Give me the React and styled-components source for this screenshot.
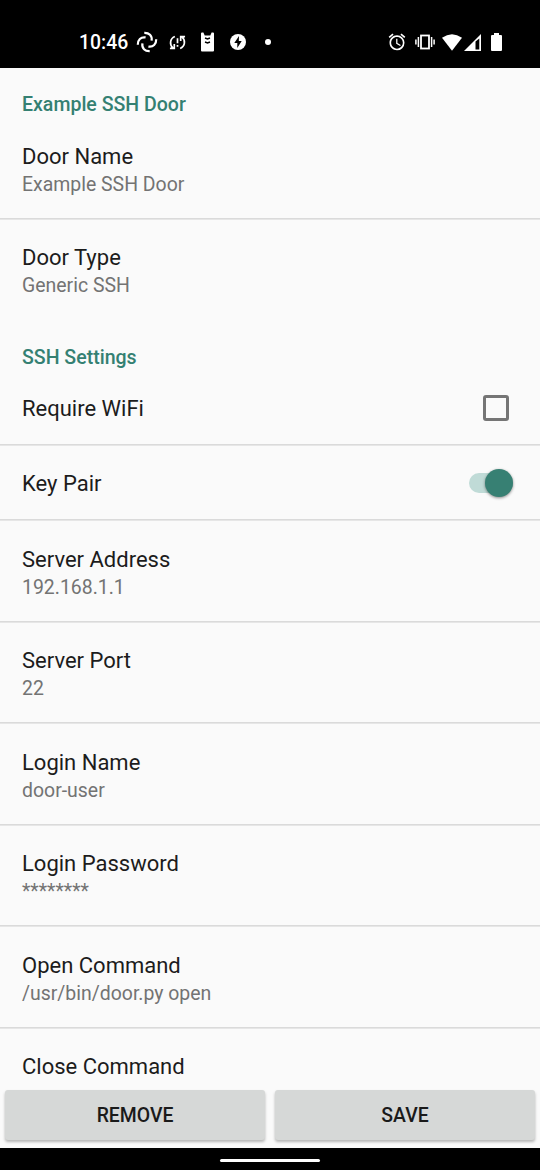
import React from "react";
import styled, { createGlobalStyle } from "styled-components";
import { MdAlarm } from "react-icons/md";

const GlobalStyle = createGlobalStyle`
  * { box-sizing: border-box; }
  body { margin: 0; background: #fafafa; font-family: Roboto, sans-serif; }
`;

const Screen = styled.div`
  width: 540px;
  height: 1170px;
  display: flex;
  flex-direction: column;
  overflow: hidden;
  background: #fafafa;
`;

const StatusBar = styled.header`
  flex: none;
  height: 68px;
  padding: 16px 38px 0 79px;
  display: flex;
  align-items: center;
  justify-content: space-between;
  background: #000;
  color: #fff;
`;

const Clock = styled.span`
  width: 56.5px;
  padding-top: 2px;
  font-size: 19.4px;
  font-weight: 500;
  line-height: 24px;
`;

const StatusGroup = styled.div`
  display: flex;
  align-items: center;
  svg { display: block; flex: none; }
`;

const Glyph = styled.svg`
  width: ${(p) => p.$w}px;
  height: ${(p) => p.$h}px;
  margin-left: ${(p) => p.$gap || 0}px;
`;

const Settings = styled.main`
  flex: 1;
  min-height: 0;
  overflow: hidden;
`;

const Category = styled.h2`
  height: 50px;
  margin: 0;
  padding: 25px 22px 0;
  color: #348072;
  font-size: 19.55px;
  font-weight: 500;
  line-height: 24px;
`;

const Row = styled.div`
  height: ${(p) => (p.$single ? 75 : 101.5)}px;
  padding: 0 22px;
  display: flex;
  align-items: center;
  justify-content: space-between;
  background: ${(p) => (p.$last ? "none" : "linear-gradient(#dadada 50%, #e6e6e6 50%) bottom / 100% 2px no-repeat")};
`;

const Label = styled.div`
  padding: ${(p) => (p.$single ? "0 0 1px" : "4px 0 0")};
`;

const Title = styled.div`
  color: #1c1c1c;
  font-size: 22px;
  line-height: 27px;
`;

const Summary = styled.div`
  color: #737373;
  font-size: 19.45px;
  line-height: 29px;
`;

const Checkbox = styled.span`
  width: 26px;
  height: 26px;
  margin: 0 9px 2px 0;
  border: 3px solid #757575;
  border-radius: 3px;
`;

const Track = styled.span`
  width: 44px;
  height: 20px;
  margin: 0 5px 2px 0;
  display: flex;
  align-items: center;
  justify-content: flex-end;
  border-radius: 10px;
  background: #c0dbd7;
`;

const Thumb = styled.span`
  width: 28px;
  height: 28px;
  border-radius: 50%;
  background: #378073;
  box-shadow: 0 1px 3px rgba(0, 0, 0, 0.45);
`;

const Actions = styled.footer`
  flex: none;
  height: 58px;
  padding: 0 5px 8px;
  display: flex;
  gap: 10px;
`;

const Action = styled.button`
  flex: 1;
  padding: 2px 0 0;
  border: 0;
  border-radius: 3px;
  background: #d6d8d7;
  box-shadow: 0 2px 3px rgba(0, 0, 0, 0.28);
  color: #1a1a1a;
  font: 500 19.4px/24px Roboto, sans-serif;
`;

const NavBar = styled.nav`
  flex: none;
  height: 22px;
  display: flex;
  align-items: center;
  justify-content: center;
  padding-top: 2px;
  background: #000;
`;

const Handle = styled.span`
  width: 100px;
  height: 3px;
  border-radius: 1.5px;
  background: #fff;
`;

function Item({ title, summary, last, children }) {
  const single = Boolean(children);
  return (
    <Row $single={single} $last={last}>
      <Label $single={single}>
        <Title>{title}</Title>
        {!single && <Summary>{summary || "\u00a0"}</Summary>}
      </Label>
      {children}
    </Row>
  );
}

function Notifications() {
  return (
    <>
      <Glyph $w={22} $h={22} viewBox="0 0 22 22" fill="none" stroke="#fff" strokeWidth="2.2">
        {[0, 90, 180, 270].map((a) => (
          <path key={a} d="M8.3 1.8C13 1.6 16.4 4.8 15.6 9.6" transform={`rotate(${a} 11 11)`} />
        ))}
      </Glyph>
      <Glyph $w={17} $h={17} $gap={11} viewBox="0 0 18 18" fill="none" stroke="#fff" strokeWidth="1.8">
        <path d="M6.2 2.7C.8 5 .3 11.4 4.2 15M11.8 15.3C17.2 13 17.7 6.6 13.8 3M1 15.2h4.6v-4.5M17 2.8h-4.6v4.5M9 4.5v5.3M9 11.7v1.9" />
      </Glyph>
      <Glyph $w={13} $h={20} $gap={15} viewBox="0 0 13 20">
        <path fill="#fff" d="M0 1.5Q0 .5 1 .5h1.4l1.3 3.1h5.6L10.6.5H12q1 0 1 1v17q0 1-1 1H1q-1 0-1-1Z" />
        <path fill="none" stroke="#000" strokeWidth="1.4" d="M4 6l2.5 1L9 6M4 10l2.5 1L9 10" />
      </Glyph>
      <Glyph $w={16} $h={16} $gap={16} viewBox="0 0 16 16">
        <circle cx="8" cy="8" r="8" fill="#fff" />
        <path d="M9 2 4.3 9h3v5l4.4-7H8.8Z" fill="#000" />
      </Glyph>
      <Glyph $w={6} $h={6} $gap={19} viewBox="0 0 6 6">
        <circle cx="3" cy="3" r="3" fill="#fff" />
      </Glyph>
    </>
  );
}

function SystemIcons() {
  return (
    <>
      <MdAlarm size={20} />
      <Glyph $w={20} $h={16} $gap={8} viewBox="0 0 20 16" fill="none" stroke="#fff">
        <rect x="6" y="1.5" width="8" height="13" strokeWidth="1.8" />
        <path strokeWidth="1.5" d="M3.4 3v10M16.6 3v10M.9 5.5v5M19.1 5.5v5" />
      </Glyph>
      <Glyph $w={20} $h={17} $gap={7} viewBox="0 0 20 17">
        <path fill="#fff" d="M0 3.7Q10-3.3 20 3.7L10 16.8Z" />
      </Glyph>
      <Glyph $w={17} $h={17} $gap={2} viewBox="0 0 17 17">
        <path fill="#fff" fillRule="evenodd" d="M17 0v17H0ZM11.5 7.6v8h3.8V4.4Z" />
      </Glyph>
      <Glyph $w={11} $h={18} $gap={10} viewBox="0 0 11 18">
        <path fill="#fff" d="M3 0h5v2h2q1 0 1 1v14q0 1-1 1H1q-1 0-1-1V3q0-1 1-1h2Z" />
      </Glyph>
    </>
  );
}

export default function App() {
  return (
    <Screen>
      <GlobalStyle />
      <StatusBar>
        <StatusGroup>
          <Clock>10:46</Clock>
          <Notifications />
        </StatusGroup>
        <StatusGroup>
          <SystemIcons />
        </StatusGroup>
      </StatusBar>
      <Settings>
        <Category>Example SSH Door</Category>
        <Item title="Door Name" summary="Example SSH Door" />
        <Item title="Door Type" summary="Generic SSH" last />
        <Category>SSH Settings</Category>
        <Item title="Require WiFi">
          <Checkbox />
        </Item>
        <Item title="Key Pair">
          <Track>
            <Thumb />
          </Track>
        </Item>
        <Item title="Server Address" summary="192.168.1.1" />
        <Item title="Server Port" summary="22" />
        <Item title="Login Name" summary="door-user" />
        <Item title="Login Password" summary="********" />
        <Item title="Open Command" summary="/usr/bin/door.py open" />
        <Item title="Close Command" last />
      </Settings>
      <Actions>
        <Action>REMOVE</Action>
        <Action>SAVE</Action>
      </Actions>
      <NavBar>
        <Handle />
      </NavBar>
    </Screen>
  );
}
